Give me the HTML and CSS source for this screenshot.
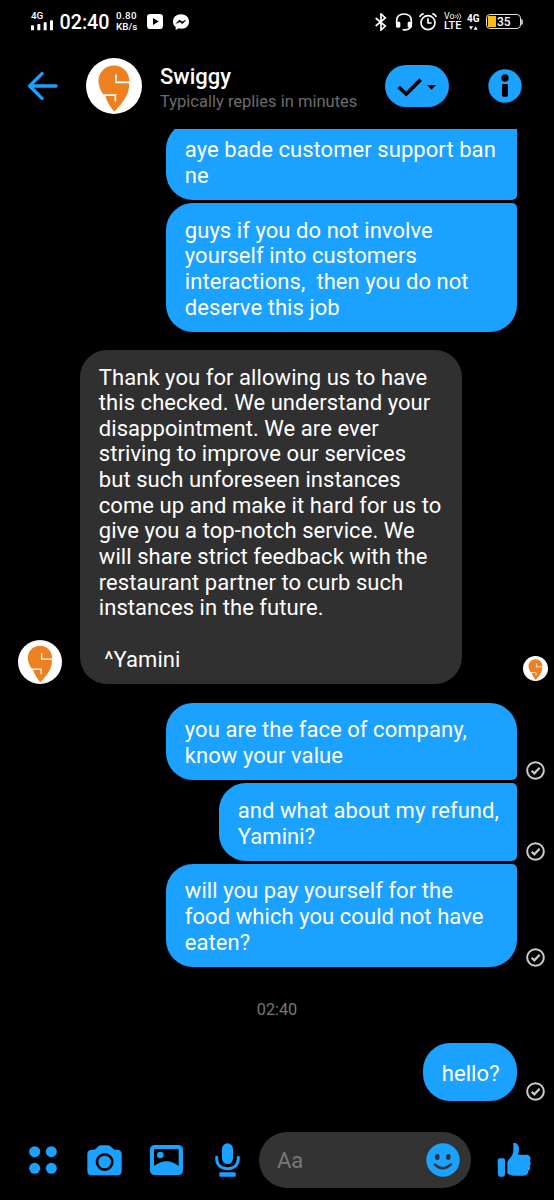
FILE: index.html
```
<!DOCTYPE html>
<html lang="en">
<head>
<meta charset="utf-8">
<title>Swiggy</title>
<link rel="stylesheet" href="styles.css">
</head>
<body>
<svg class="defs" width="0" height="0">
  <symbol id="logo" viewBox="0 0 166 166">
    <circle cx="83" cy="83" r="83" fill="#fff"/>
    <path d="M83 22C109 22 129 42 129 70L127 75C133 102 107 137 84 159C73 147 62 130 57 112L50 107C42 92 37 82 37 68C37 42 57 22 83 22Z" fill="#ef8022"/>
    <path d="M89 49V72H130M46 110H87V129" fill="none" stroke="#fff" stroke-width="5"/>
  </symbol>
  <symbol id="sent" viewBox="0 0 57 57">
    <circle cx="28.500" cy="28.500" r="25" fill="none" stroke="#c9cbd0" stroke-width="6"/>
    <path d="M17 29L25 37L41 20" fill="none" stroke="#c9cbd0" stroke-width="6.500"/>
  </symbol>
</svg>
<main class="phone">
  <div class="status">
    <div class="signal"><span>4G</span>
      <svg width="23" height="11" viewBox="0 0 69 33" fill="#fff"><rect y="16" width="9" height="15" rx="2"/><rect x="19" y="12" width="9" height="19" rx="2"/><rect x="38" y="7" width="9" height="24" rx="2"/><rect x="57" y="1" width="9" height="30" rx="2"/></svg>
    </div>
    <div class="clock">02:40</div>
    <div class="speed"><span>0.80</span><span>KB/s</span></div>
    <svg class="play" width="16" height="15" viewBox="0 0 48 45"><rect width="48" height="45" rx="10" fill="#fff"/><path d="M18 12L35 22.500L18 33Z"/></svg>
    <svg class="msgr" width="16" height="16" viewBox="0 0 48 48"><path d="M24 1C10 1 0 10 0 23C0 30 3 35 8 39V48L17 43C35 47 48 38 48 23C48 10 38 1 24 1Z" fill="#fff"/><path d="M10 28L20 18L27 24L38 19L28 29L21 23Z" stroke="#000" stroke-width="2"/></svg>
    <svg class="bt" width="12" height="18" viewBox="0 0 36 54"><path d="M2 15L31 39L18 51V3L31 15L2 39" fill="none" stroke="#fff" stroke-width="5"/></svg>
    <svg class="head" width="18" height="18" viewBox="0 0 54 54"><path d="M5 32V24C5 10 14 3 27 3S49 10 49 24V34C49 45 43 50 29 51" fill="none" stroke="#fff" stroke-width="5"/><rect x="3" y="26" width="13" height="18" rx="4" fill="#fff"/><rect x="38" y="26" width="13" height="18" rx="4" fill="#fff"/><ellipse cx="28" cy="50" rx="6" ry="3" fill="#fff"/></svg>
    <svg class="alarm" width="18" height="18" viewBox="0 0 54 54" fill="none" stroke="#fff" stroke-width="5"><circle cx="27" cy="29" r="21"/><path d="M27 16V30H38M2 12C4 6 8 3 14 2M52 12C50 6 46 3 40 2"/></svg>
    <div class="volte"><span>Vo<svg width="7" height="7" viewBox="0 0 21 21" fill="none" stroke="#fff" stroke-width="2.500"><path d="M2 6Q6 10 2 15M7 3Q13 10 7 18M13 1Q22 10 13 20"/></svg></span><b>LTE</b></div>
    <div class="net"><span>4G</span><svg width="9" height="4" viewBox="0 0 27 12" fill="#fff"><path d="M0 1H12L6 11ZM14 11H26L20 1Z"/></svg></div>
    <div class="battery"><i></i><span>35</span></div><div class="nub"></div>
  </div>

  <header class="header">
    <svg class="back" width="31" height="28" viewBox="0 0 93 84" fill="none" stroke="#1ba1ff" stroke-width="10" stroke-linecap="round" stroke-linejoin="round"><path d="M45 5L8 42L45 79M9 42H87"/></svg>
    <svg class="avatar" width="56" height="56"><use href="#logo"/></svg>
    <div class="who"><h1>Swiggy</h1><p>Typically replies in minutes</p></div>
    <div class="done"><svg width="64" height="42" viewBox="0 0 192 126"><path d="M41 66L64 87L107 44" fill="none" stroke="#000" stroke-width="11"/><path d="M126 60H153L139.500 74Z"/></svg></div>
    <svg class="info" width="34" height="34" viewBox="0 0 102 102"><circle cx="51" cy="51" r="50" fill="#1ba1ff"/><circle cx="51" cy="27" r="11"/><rect x="42" y="45" width="18" height="38" rx="4"/></svg>
  </header>

  <section class="chat">
    <div class="row out"><div class="bubble join-top join-bottom wide">aye bade customer support ban
ne</div></div>
    <div class="row out"><div class="bubble join-top wide">guys if you do not involve
yourself into customers
interactions,  then you do not
deserve this job</div></div>
    <div class="row in">
      <svg class="sender" width="44" height="44"><use href="#logo"/></svg>
      <div class="bubble">Thank you for allowing us to have
this checked. We understand your
disappointment. We are ever
striving to improve our services
but such unforeseen instances
come up and make it hard for us to
give you a top-notch service. We
will share strict feedback with the
restaurant partner to curb such
instances in the future.

 ^Yamini</div>
      <svg class="seen" width="25" height="25"><use href="#logo"/></svg>
    </div>
    <div class="row out"><div class="bubble join-bottom wide">you are the face of company,
know your value</div><svg class="sent"><use href="#sent"/></svg></div>
    <div class="row out"><div class="bubble join-top join-bottom medium">and what about my refund,
Yamini?</div><svg class="sent"><use href="#sent"/></svg></div>
    <div class="row out"><div class="bubble join-top wide">will you pay yourself for the
food which you could not have
eaten?</div><svg class="sent"><use href="#sent"/></svg></div>
    <time class="stamp">02:40</time>
    <div class="row out"><div class="bubble short">hello?</div><svg class="sent"><use href="#sent"/></svg></div>
  </section>

  <footer class="composer">
    <svg class="dots" width="28" height="28" viewBox="0 0 84 84" fill="#1ba1ff"><circle cx="17" cy="17" r="16.500"/><circle cx="67" cy="17" r="16.500"/><circle cx="17" cy="67" r="16.500"/><circle cx="67" cy="67" r="16.500"/></svg>
    <svg class="camera" width="35" height="31" viewBox="0 0 105 93"><path d="M14 14H23L33 5Q37 1 43 1H62Q68 1 72 5L82 14H91Q104 14 104 28V77Q104 91 90 91H15Q1 91 1 77V28Q1 14 14 14Z" fill="#1ba1ff"/><circle cx="53" cy="51" r="23" fill="none" stroke="#000" stroke-width="8"/></svg>
    <svg class="photo" width="33" height="30" viewBox="0 0 99 90"><rect width="99" height="90" rx="14" fill="#1ba1ff"/><path d="M12 16Q12 12 16 12H82Q86 12 86 16V63Q50 35 12 63Z"/><circle cx="31" cy="30" r="10" fill="#1ba1ff"/></svg>
    <svg class="mic" width="25" height="34" viewBox="0 0 75 102"><rect x="21" y="1" width="33" height="62" rx="16.500" fill="#1ba1ff"/><path d="M5 43V46C5 66 17 77 37.500 77S70 66 70 46V43" fill="none" stroke="#1ba1ff" stroke-width="9" stroke-linecap="round"/><rect x="13" y="88" width="49" height="13" rx="3" fill="#1ba1ff"/></svg>
    <div class="field"><span>Aa</span>
      <svg width="34" height="34" viewBox="0 0 102 102"><circle cx="51" cy="51" r="50" fill="#1ba1ff"/><ellipse cx="34" cy="42" rx="7" ry="9" fill="#333"/><ellipse cx="67" cy="42" rx="7" ry="9" fill="#333"/><path d="M26 64Q50 87 75 64" fill="none" stroke="#333" stroke-width="7" stroke-linecap="round"/></svg>
    </div>
    <svg class="like" width="35" height="36" viewBox="0 0 105 108" fill="#1ba1ff"><path d="M9 49H19Q24 49 24 55V96Q24 104 18 104H9Q3 104 3 96L2 55Q2 49 9 49Z"/><path d="M48 4C58 0 66 9 66 22C66 29 64 34 63 38H88C99 38 104 49 98 56C103 63 101 69 98 72C101 80 98 84 94 87C94 96 88 101 79 101H50C42 101 36 98 31 94V61C34 50 49 42 49 26V6Z"/></svg>
  </footer>
</main>
</body>
</html>
```

FILE: styles.css
```
* { box-sizing: border-box; }
body { margin: 0; background: #000; color: #fff; font-family: Roboto, sans-serif; }
svg { display: block; flex: none; }
.defs { position: absolute; }
.phone { width: 554px; height: 1200px; display: flex; flex-direction: column; overflow: hidden; background: #000; }

.status { height: 43px; flex: none; display: flex; align-items: center; padding-left: 31px; white-space: nowrap; }
.status > * { flex: none; }
.signal { width: 28.500px; font-size: 9.800px; line-height: 8px; font-weight: 500; }
.signal span { display: block; }
.clock { width: 56.500px; font-size: 19.700px; font-weight: 500; line-height: 24px; padding-top: 2px; }
.speed { width: 31px; display: flex; flex-direction: column; gap: 1px; font-size: 9.800px; line-height: 10px; font-weight: 500; }
.speed span:first-child { letter-spacing: 0.400px; }
.msgr { margin-left: 10px; }
.bt { margin-left: 186px; }
.head { margin-left: 8px; }
.alarm { margin-left: 6px; }
.volte { width: 19px; margin-left: 7px; display: flex; flex-direction: column; gap: 1px; font-size: 9px; line-height: 8px; }
.volte span { display: flex; align-items: center; height: 8px; }
.volte b { font-size: 11px; line-height: 10px; font-weight: 500; }
.net { width: 14px; margin-left: 4px; font-size: 10px; line-height: 10px; font-weight: 700; }
.net span { display: block; }
.net svg { margin: 2px 0 0 2px; }
.battery { width: 35px; height: 15px; margin-left: 5px; display: flex; align-items: center; border: 1px solid #ddd; border-radius: 4px; padding: 1px; font-size: 12px; line-height: 12px; font-weight: 500; }
.battery i { width: 8px; height: 11px; background: #ffbd12; margin-right: 1px; }
.nub { width: 2px; height: 6px; background: #bbb; border-radius: 0 2px 2px 0; }

.header { height: 86px; flex: none; display: flex; align-items: center; padding-left: 27px; }
.avatar { margin-left: 28px; }
.who { width: 225px; margin-left: 18px; padding-top: 5px; }
.who h1 { margin: 0; font-size: 22px; line-height: 26px; font-weight: 500; }
.who p { margin: 0; font-size: 16.500px; line-height: 24px; color: #6c6c6c; white-space: nowrap; }
.done { width: 64px; height: 42px; border-radius: 21px; background: #1ba1ff; }
.info { margin-left: 39px; }

.chat { height: 991px; flex: none; overflow: hidden; display: flex; flex-direction: column; gap: 3.300px; }
.row { display: flex; align-items: flex-end; flex: none; }
.row:first-child { margin-top: -6.600px; }
.row.out { width: 545px; padding-left: 166px; }
.row.out .bubble { margin-left: auto; margin-right: 28px; background: #1ba1ff; }
.bubble { padding: 14.600px 0 11.400px 18.800px; border-radius: 27px; font-size: 22px; line-height: 25.650px; white-space: pre; letter-spacing: 0.060px; }
.sent { width: 19px; height: 19px; margin-left: -19px; }
.join-top { border-top-right-radius: 5px; }
.join-bottom { border-bottom-right-radius: 5px; }
.wide { width: 351px; }
.medium { width: 298px; }
.short { width: 94px; height: 58px; line-height: 31px; }
.row.in { padding-left: 18px; margin: 15px 0 15.600px; }
.row.in .bubble { width: 382px; margin-left: 18px; background: #303030; }
.seen { margin: 0 0 3px 61px; }
.stamp { align-self: center; margin: 27.800px 0 19px; font-size: 16.200px; line-height: 23px; color: #777; }

.composer { height: 80px; flex: none; display: flex; align-items: center; padding-left: 29px; }
.camera { margin-left: 30px; }
.photo { margin-left: 28px; }
.mic { margin-left: 32px; }
.field { width: 212px; height: 56px; margin-left: 19px; padding: 0 11px 0 18px; border-radius: 28px; background: #333; display: flex; align-items: center; justify-content: space-between; font-size: 22px; color: #777; }
.field span { padding-top: 1px; }
.like { margin-left: 26px; }
```
